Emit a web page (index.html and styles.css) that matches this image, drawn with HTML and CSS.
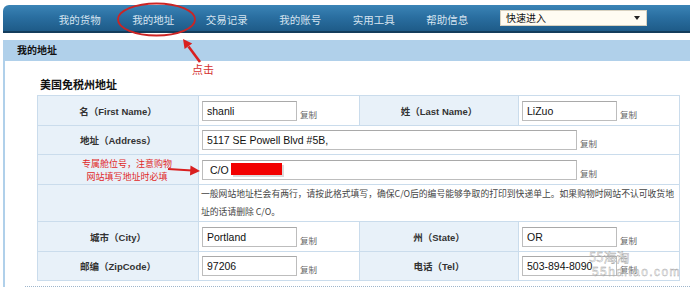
FILE: index.html
```html
<!DOCTYPE html>
<html lang="zh-CN">
<head>
<meta charset="utf-8">
<title>我的地址</title>
<link rel="stylesheet" href="styles.css">
</head>
<body>
<div class="page">
  <nav class="nav">
    <a class="nav-item">我的货物</a>
    <a class="nav-item">我的地址</a>
    <a class="nav-item">交易记录</a>
    <a class="nav-item">我的账号</a>
    <a class="nav-item">实用工具</a>
    <a class="nav-item">帮助信息</a>
    <div class="quick"><span>快速进入</span><span class="caret"></span></div>
  </nav>
  <div class="crumb">我的地址</div>
  <div class="panel">
    <h2 class="title">美国免税州地址</h2>
    <div class="grid">
      <div class="lbl">名（First Name）</div>
      <div class="val"><span class="inp">shanli</span><span class="copy">复制</span></div>
      <div class="lbl">姓（Last Name）</div>
      <div class="val"><span class="inp">LiZuo</span><span class="copy">复制</span></div>

      <div class="lbl">地址（Address）</div>
      <div class="val span3"><span class="inp long">5117 SE Powell Blvd #5B,</span><span class="copy">复制</span></div>

      <div class="lbl tip">专属舱位号，注意购物<br>网站填写地址时必填</div>
      <div class="val span3"><span class="inp long co">C/O</span><span class="copy">复制</span></div>

      <div class="lbl"></div>
      <div class="note span3">一般网站地址栏会有两行，请按此格式填写，确保C/O后的编号能够争取的打印到快递单上。如果购物时网站不认可收货地<br>址的话请删除 C/O。</div>

      <div class="lbl">城市（City）</div>
      <div class="val"><span class="inp">Portland</span><span class="copy">复制</span></div>
      <div class="lbl">州（State）</div>
      <div class="val"><span class="inp">OR</span><span class="copy">复制</span></div>

      <div class="lbl">邮编（ZipCode）</div>
      <div class="val"><span class="inp">97206</span><span class="copy">复制</span></div>
      <div class="lbl">电话（Tel）</div>
      <div class="val"><span class="inp">503-894-8090</span><span class="copy">复制</span></div>
    </div>
    <div class="dots"></div>
  </div>

  <svg class="marks" width="690" height="287" viewBox="0 0 690 287">
    <ellipse cx="156.5" cy="19.5" rx="38.5" ry="16" fill="none" stroke="#cc2424" stroke-width="1.8"/>
    <line x1="200" y1="62" x2="188.5" y2="46.5" stroke="#d91f1f" stroke-width="2.6"/>
    <polygon points="183,39 192.2,43.4 184.6,49.1" fill="#d91f1f"/>
    <line x1="168" y1="169" x2="192" y2="170.5" stroke="#d91f1f" stroke-width="2.2"/>
    <polygon points="200,171 190.5,165.5 190,175.5" fill="#d91f1f"/>
    <rect x="233" y="165" width="51" height="12" fill="#999" opacity="0.35"/>
    <rect x="231" y="163" width="51" height="12" fill="#f20000"/>
  </svg>
  <span class="click-note">点击</span>
  <div class="watermark"><span class="wm1">55海淘</span><span class="wm2">55haitao.com</span></div>
</div>
</body>
</html>
```

FILE: styles.css
```css
* { box-sizing: border-box; }

html, body {
  margin: 0;
  padding: 0;
  background: #fff;
}

body {
  width: 690px;
  height: 287px;
  overflow: hidden;
  font-family: "Liberation Sans", "Noto Sans CJK SC", sans-serif;
  color: #222;
}

.page {
  position: relative;
  width: 690px;
  height: 287px;
  padding: 5px 0 0 3px;
}

.nav {
  display: flex;
  align-items: center;
  height: 28px;
  padding-left: 40px;
  border-radius: 6px 0 0 0;
  background: linear-gradient(to bottom, #3b84b6 0%, #2a6fa1 45%, #1e5b88 100%);
  border-bottom: 2px solid #143d5c;
}

.nav-item {
  width: 73.5px;
  text-align: center;
  font-family: "Noto Sans CJK SC", sans-serif;
  font-size: 10.5px;
  line-height: 14px;
  padding-top: 3px;
  color: #d6e4f0;
}

.quick {
  display: flex;
  align-items: center;
  justify-content: space-between;
  margin-left: 16px;
  width: 147px;
  height: 16px;
  padding: 0 6px 0 5px;
  background: #fffcf2;
  border: 1px solid #d8d2c0;
  font-family: "Noto Sans CJK SC", sans-serif;
  font-size: 10px;
  line-height: 14px;
  color: #111;
}

.caret {
  width: 0;
  height: 0;
  border-left: 3px solid transparent;
  border-right: 3px solid transparent;
  border-top: 4px solid #222;
}

.crumb {
  margin-top: 7px;
  height: 21px;
  padding: 3px 0 0 14px;
  background: #b0d0ea;
  font-family: "Noto Sans CJK SC", sans-serif;
  font-weight: bold;
  font-size: 10px;
  line-height: 14px;
  color: #111;
}

.panel {
  border-left: 2px solid #b0d0ea;
  height: 226px;
  padding-top: 15px;
}

.title {
  margin: 0 0 3px 35px;
  font-family: "Noto Sans CJK SC", sans-serif;
  font-size: 11px;
  line-height: 16px;
  font-weight: bold;
  color: #111;
}

.grid {
  margin-left: 32px;
  width: max-content;
  display: grid;
  grid-template-columns: 160px 160px 158px 160px;
  grid-template-rows: 29px 28px 29px 36px 29px 28px;
  gap: 1px;
  background: #cadcec;
  border: 1px solid #cadcec;
}

.lbl {
  display: flex;
  align-items: center;
  justify-content: center;
  background: #e8f1f9;
  font-family: "Liberation Sans", "Noto Sans CJK SC", sans-serif;
  font-weight: bold;
  font-size: 9.5px;
  color: #333;
  white-space: nowrap;
}

.lbl.tip {
  padding-left: 18px;
  font-weight: normal;
  font-family: "Noto Sans CJK SC", sans-serif;
  font-size: 9px;
  line-height: 13px;
  text-align: center;
  color: #e02828;
}

.val {
  display: flex;
  align-items: center;
  padding-left: 3px;
  background: #fff;
}

.span3 { grid-column: span 3; }

.inp {
  display: flex;
  align-items: center;
  width: 95px;
  height: 20px;
  padding-left: 4px;
  border: 1px solid #bdbdbd;
  border-top-color: #a9a9a9;
  background: #fff;
  font-family: "Liberation Sans", sans-serif;
  font-size: 10.5px;
  color: #111;
  white-space: nowrap;
}

.inp.long { width: 375px; }
.inp.co { padding-left: 7px; }

.copy {
  margin: 6px 0 0 3px;
  font-family: "Noto Sans CJK SC", sans-serif;
  font-size: 8.5px;
  line-height: 10px;
  color: #666;
}

.note {
  background: #fff;
  padding-left: 2px;
  font-family: "Noto Sans CJK SC", "Liberation Sans", sans-serif;
  font-size: 8.8px;
  line-height: 18px;
  color: #444;
  white-space: nowrap;
}

.dots {
  margin: 5px 0 0 20px;
  border-top: 1px dotted #9fb6cc;
}

.marks {
  position: absolute;
  left: 0;
  top: 0;
  pointer-events: none;
}

.click-note {
  position: absolute;
  left: 192px;
  top: 62px;
  font-family: "Noto Sans CJK SC", sans-serif;
  font-size: 11px;
  line-height: 15px;
  color: #d43030;
}

.watermark {
  position: absolute;
  left: 589px;
  top: 249px;
  display: flex;
  flex-direction: column;
  align-items: flex-start;
  pointer-events: none;
}

.wm1 {
  font-family: "Noto Sans CJK SC", sans-serif;
  font-size: 13px;
  line-height: 16px;
  color: rgba(255, 255, 255, 0.4);
  -webkit-text-stroke: 0.4px #a0a0a0;
}

.wm2 {
  margin-left: 3px;
  font-family: "Liberation Sans", sans-serif;
  font-size: 12px;
  line-height: 14px;
  letter-spacing: 1.4px;
  color: rgba(255, 255, 255, 0.4);
  -webkit-text-stroke: 0.4px #a0a0a0;
}
```
